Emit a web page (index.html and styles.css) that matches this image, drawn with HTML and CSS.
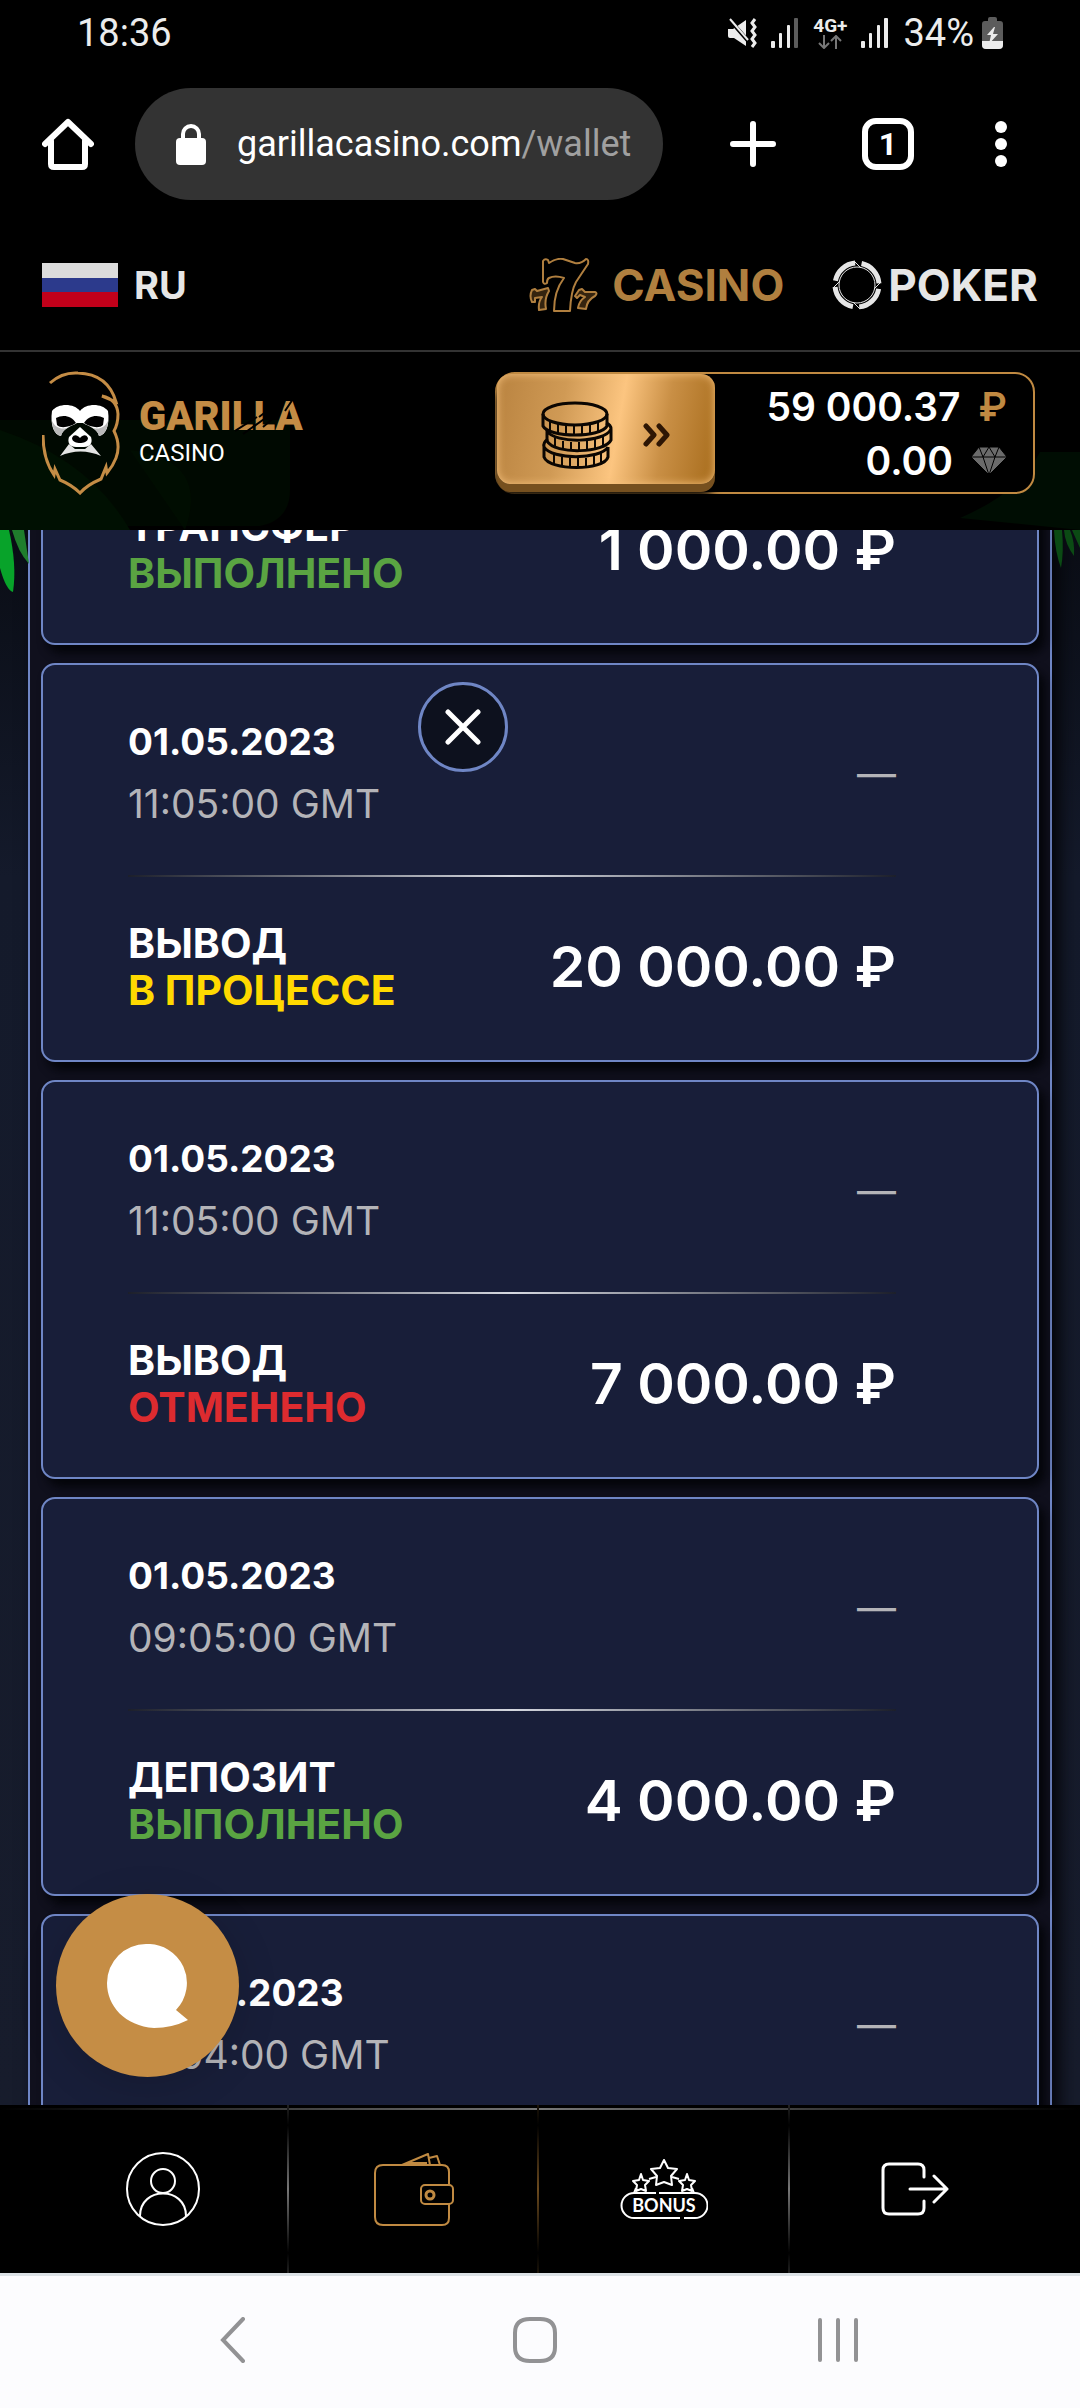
FILE: index.html
```html
<!DOCTYPE html>
<html lang="ru">
  <head>
    <meta charset="UTF-8" />
    <meta name="viewport" content="width=device-width, initial-scale=1" />
    <title>Garilla Casino</title>
    <link rel="stylesheet" href="styles.css">
  </head>
  <body>
    <div class="status-bar">
      <span class="clock">18:36</span>
      <div class="status-icons">
        <svg width="30" height="30" viewBox="0 0 30 30">
          <path d="M1 11h5l13-9v26L7 20H3q-2 0-2-2z" fill="#ececec" />
          <path d="M2 1l20 23" stroke="#000" stroke-width="4" />
          <path d="M3 1l18 21" stroke="#ececec" stroke-width="2" />
          <path d="M28 1l-3 4 3 4-3 4 3 4-3 4 3 4-3 4" fill="none" stroke="#ececec" stroke-width="3" />
        </svg>
        <svg width="28" height="30" viewBox="0 0 28 30" fill="#ececec">
          <rect x="0" y="23" width="4" height="7" rx="1" />
          <rect x="8" y="15" width="3" height="15" rx="1" />
          <rect x="16" y="7" width="3" height="23" rx="1" />
          <rect x="23" y="0" width="4" height="30" rx="1" fill="#5c5c5c" />
        </svg>
        <div class="network">
          <span>4G+</span>
          <svg width="24" height="14" viewBox="0 0 24 14" fill="none" stroke="#777" stroke-width="2">
            <path d="M6 0v12M1 8l5 5 5-5M18 14V2M13 6l5-5 5 5" />
          </svg>
        </div>
        <svg width="28" height="30" viewBox="0 0 28 30" fill="#ececec">
          <rect x="0" y="23" width="4" height="7" rx="1" />
          <rect x="8" y="15" width="3" height="15" rx="1" />
          <rect x="16" y="7" width="3" height="23" rx="1" />
          <rect x="23" y="0" width="4" height="30" rx="1" />
        </svg>
        <span>34%</span>
        <svg width="21" height="32" viewBox="0 0 21 32">
          <path d="M6 2q0-2 2-2h5q2 0 2 2v2h3q3 0 3 3v21q0 4-4 4H4q-4 0-4-4V7q0-3 3-3h3z" fill="#5c5c5c" />
          <path d="M0 24h21v4q0 4-4 4H4q-4 0-4-4z" fill="#ececec" />
          <path d="M12 10L5 18h4l-2 9 9-10h-5l2-7z" fill="#ececec" />
        </svg>
      </div>
    </div>

    <div class="browser-bar">
      <button class="icon-btn" aria-label="Home">
        <svg width="52" height="52" viewBox="0 0 52 52" fill="none" stroke="#fff" stroke-width="6" stroke-linecap="round" stroke-linejoin="round">
          <path d="M3 26L26 4l23 22" />
          <path d="M9 23v23q0 3 3 3h28q3 0 3-3V23" />
        </svg>
      </button>
      <button class="address">
        <svg width="30" height="41" viewBox="0 0 30 41">
          <path d="M7 16V10a8 8 0 0 1 16 0v6" fill="none" stroke="#fff" stroke-width="4" />
          <rect y="14" width="30" height="27" rx="4" fill="#fff" />
        </svg>
        <span>garillacasino.com<span class="path">/wallet</span></span>
      </button>
      <button class="icon-btn" aria-label="New tab">
        <svg width="46" height="46" viewBox="0 0 46 46" stroke="#fff" stroke-width="6" stroke-linecap="round">
          <path d="M23 3v40M3 23h40" />
        </svg>
      </button>
      <button class="tab-count">1</button>
      <button class="icon-btn" aria-label="Menu">
        <svg width="12" height="46" viewBox="0 0 12 46" fill="#fff">
          <circle cx="6" cy="6" r="6" /><circle cx="6" cy="23" r="6" /><circle cx="6" cy="40" r="6" />
        </svg>
      </button>
    </div>

    <header class="site-header">
      <div class="top-row">
        <button class="lang"><span class="flag"></span>RU</button>
        <nav class="sections">
          <a href="#" class="section active">
            <svg width="69" height="54" viewBox="0 0 69 54" fill="none" stroke="#b07f3f" stroke-width="2" stroke-linejoin="round">
              <path d="M14 3q2-3 5-1l1 3q7-5 14-4l12 4q6 1 11-4 3 0 2 5L47 24q-5 9-6 29H25q0-20 10-33-9-3-15 0-2 1-2 5-3 2-4-1z" />
              <path d="M3 32l3-1 2 2 11-3 1 3q-5 8-3 18l-7 1q-1-8 3-13l-7 1v4H3q-3-6 0-12z" fill="#35240f" />
              <path d="M50 32l3-1 3 3h10q3 1 0 4-8 4-9 13l-8-1q1-7 7-11l-5-2-3 3-2-2z" fill="#35240f" />
            </svg>
            CASINO
          </a>
          <a href="#" class="section poker">
            <svg width="50" height="50" viewBox="0 0 50 50" fill="none" stroke="#e6e6e6">
              <circle cx="25" cy="25" r="22" stroke-width="5" stroke-dasharray="28 6.56" stroke-dashoffset="-4" />
              <circle cx="25" cy="25" r="18" stroke-width="1" />
              <path d="M22 1l7 7M49 22l-7 7M28 49l-7-7M1 28l7-7" stroke-width="1" />
            </svg>
            POKER
          </a>
        </nav>
      </div>

      <div class="brand-row">
        <svg class="leaf-dim leaf-dim-left" width="290" height="110" viewBox="0 0 290 110" fill="#001002">
          <path d="M0 0h290v70q0 30-30 36H0z" opacity=".55" />
          <path d="M0 10Q90 40 130 110H0z" />
          <path d="M130 30q80 10 55 80z" opacity=".6" />
        </svg>
        <svg class="leaf-dim leaf-dim-right" width="120" height="78" viewBox="0 0 120 78" fill="#000d03">
          <path d="M120 0H80Q60 40 0 66l120 12z" />
        </svg>
        <a href="#" class="logo">
          <svg width="78" height="124" viewBox="0 0 78 124">
            <g fill="none" stroke="#c48c45" stroke-width="3">
              <path d="M8 12Q20 1 36 2q30 1 38 29l-14-6q15 3 16 18 0 10-4 17 7 14 2 27-3 8-9 15l-1-6-5 12q-14 6-21 14-8-8-20-13l-5-11-1 6Q1 88 1 64" />
            </g>
            <path d="M10 40c6-8 22-8 28 0 6-8 22-8 28 0 2 14-2 24-9 25-1-7-11-10-16-13h-6c-5 3-15 6-16 13-7-1-11-11-9-25z" fill="#fff" />
            <path d="M10 50c0 8 4 14 9 15 1-4 4-7 8-9-6 3-13 2-17-6zM66 50c0 8-4 14-9 15-1-4-4-7-8-9 6 3 13 2 17-6z" fill="#b9b9b9" />
            <path d="M14 47c7-4 16-2 20 5-6 4-15 6-19 2zM62 47c-7-4-16-2-20 5 6 4 15 6 19 2z" fill="#000" />
            <path d="M38 56l-11 10c-2 6 1 10 7 10h8c6 0 9-4 7-10z" fill="#fff" />
            <path d="M30 67c2-4 5-3 8 0 3-3 6-4 8 0 0 4-5 5-8 5s-8-1-8-5z" fill="#000" />
            <path d="M18 85l9-12 6 5h10l6-5 10 12c-13-6-28-6-41 0z" fill="#e4e4e4" />
          </svg>
          <span class="logo-text">
            <span class="logo-name">GARILLA</span>
            <span class="logo-sub">CASINO</span>
            <svg class="scratches" width="60" height="36" viewBox="0 0 60 36" stroke="#000" stroke-width="2">
              <path d="M0 32l22-14M8 35l24-17M24 18l16-12M28 28l14-12M50 12l8-12" />
            </svg>
          </span>
        </a>
        <div class="balance">
          <button class="cashier" aria-label="Касса">
            <svg width="72" height="68" viewBox="0 0 72 68" fill="none" stroke="#0b0602" stroke-width="3">
              <path d="M3 46v10c5 14 60 14 64 0V46M3 46c-1-4 1-6 4-8M3 46c8 13 56 13 64 0" />
              <path d="M13 53v10M21 56v9M29 57v9M37 57v9M45 57v9M53 55v9M60 52v9" stroke-width="2" />
              <path d="M6 28v12c8 14 58 12 64-1V28M6 30c8 13 58 12 64-2q0-4-5-6" />
              <path d="M14 37v10M22 40v9M30 41v9M38 41v9M46 40v9M54 38v9M62 35v9" stroke-width="2" />
              <ellipse cx="34" cy="13" rx="32" ry="11" />
              <path d="M2 13v12c6 12 58 12 64 0V13" />
              <path d="M9 20v9M17 23v9M25 24v9M33 24v9M41 24v9M49 23v9M57 21v9" stroke-width="2" />
            </svg>
            <svg width="28" height="24" viewBox="0 0 28 24" fill="none" stroke="#2e1604" stroke-width="5" stroke-linecap="round" stroke-linejoin="round">
              <path d="M3 3l8 9-8 9M16 3l8 9-8 9" />
            </svg>
          </button>
          <div class="sums">
            <span class="sum">59 000.37 <span class="rub">₽</span></span>
            <span class="sum">0.00
              <svg width="36" height="28" viewBox="0 0 36 28" fill="#6b6b6b" stroke="#000" stroke-width="1">
                <path d="M8 0h20l8 10-18 18L0 10z" />
                <path d="M0 10h36M8 0l4 10 6 18 6-18 4-10M12 10l6-10 6 10" fill="none" />
              </svg>
            </span>
          </div>
        </div>
      </div>
    </header>

    <main class="wallet">
      <svg class="leaf leaf-left" width="40" height="70" viewBox="0 0 40 70">
        <path d="M0 0h9q8 35 4 62Q6 60 0 38z" fill="#08a32a" />
        <path d="M12 0h12l5 34Q18 22 12 0z" fill="#1f7d2c" />
      </svg>
      <svg class="leaf leaf-right" width="26" height="50" viewBox="0 0 26 50" fill="#0b4a14">
        <path d="M0 0h8q2 22-1 38Q1 22 0 0zM10 0h6q5 12 4 26Q11 14 10 0zM18 0h8v18z" />
      </svg>

      <ul class="history">
        <li class="card">
          <div class="row">
            <div class="what"><b>ТРАНСФЕР</b><b class="done">ВЫПОЛНЕНО</b></div>
            <span class="amount">1 000.00 ₽</span>
          </div>
        </li>
        <li class="card">
          <div class="row">
            <div class="when"><b>01.05.2023</b><span>11:05:00 GMT</span></div>
            <span class="dash">—</span>
          </div>
          <hr>
          <div class="row">
            <div class="what"><b>ВЫВОД</b><b class="pending">В ПРОЦЕССЕ</b></div>
            <span class="amount">20 000.00 ₽</span>
          </div>
        </li>
        <li class="card">
          <div class="row">
            <div class="when"><b>01.05.2023</b><span>11:05:00 GMT</span></div>
            <span class="dash">—</span>
          </div>
          <hr>
          <div class="row">
            <div class="what"><b>ВЫВОД</b><b class="cancelled">ОТМЕНЕНО</b></div>
            <span class="amount">7 000.00 ₽</span>
          </div>
        </li>
        <li class="card">
          <div class="row">
            <div class="when"><b>01.05.2023</b><span>09:05:00 GMT</span></div>
            <span class="dash">—</span>
          </div>
          <hr>
          <div class="row">
            <div class="what"><b>ДЕПОЗИТ</b><b class="done">ВЫПОЛНЕНО</b></div>
            <span class="amount">4 000.00 ₽</span>
          </div>
        </li>
        <li class="card">
          <div class="row">
            <div class="when"><b>30.04.2023</b><span>12:04:00 GMT</span></div>
            <span class="dash">—</span>
          </div>
          <hr>
        </li>
      </ul>

      <button class="close-btn" aria-label="Закрыть">
        <svg width="36" height="36" viewBox="0 0 36 36" stroke="#fff" stroke-width="5" stroke-linecap="round">
          <path d="M3 3l30 30M33 3L3 33" />
        </svg>
      </button>
      <button class="chat-btn" aria-label="Чат">
        <svg width="82" height="84" viewBox="0 0 82 84" fill="#fff">
          <path d="M39 0a39 39 0 0 1 30 66l12 10q-16 8-34 8C18 82 0 62 0 39A39 39 0 0 1 39 0z" />
        </svg>
      </button>
    </main>

    <nav class="bottom-nav">
      <a href="#" aria-label="Профиль">
        <svg width="74" height="74" viewBox="0 0 74 74" fill="none" stroke="#fff" stroke-width="2">
          <circle cx="37" cy="37" r="36" />
          <circle cx="37" cy="29" r="12" />
          <path d="M14 64c0-30 46-30 46 0" />
        </svg>
      </a>
      <a href="#" aria-label="Кошелёк" class="gold">
        <svg width="80" height="73" viewBox="0 0 80 73" fill="none" stroke="#c08a42" stroke-width="2" stroke-linejoin="round">
          <path d="M75 32V19q0-7-7-7H9q-8 0-8 8v44q0 8 8 8h59q7 0 7-7V51" />
          <rect x="47" y="32" width="32" height="19" rx="4" />
          <circle cx="56" cy="42" r="4" stroke-width="3" />
          <path d="M28 12L54 1l2 11M55 5l8-2 3 9M35 10h18" />
        </svg>
      </a>
      <a href="#" aria-label="Бонусы">
        <svg width="88" height="60" viewBox="0 0 88 60" fill="none" stroke="#fff" stroke-width="2" stroke-linejoin="round">
          <path d="M36 34H14a12 12 0 0 0 0 25h46M64 59h11a12 12 0 0 0 0-25H39" />
          <path d="M44 1l4 8 9 1-6 7 1 9-8-3-8 3 1-9-6-7 9-1z" />
          <path d="M21 15l2 6 6 1-4 4 1 6-5-2-5 2 1-6-4-4 6-1zM67 15l2 6 6 1-4 4 1 6-5-2-5 2 1-6-4-4 6-1z" />
          <path d="M29 20l7-2M59 20l-7-2M16 29l-2 5M72 29l2 5" />
          <text x="44" y="53" class="bonus-text">BONUS</text>
        </svg>
      </a>
      <a href="#" aria-label="Выход">
        <svg width="68" height="54" viewBox="0 0 68 54" fill="none" stroke="#fff" stroke-width="3" stroke-linecap="round" stroke-linejoin="round">
          <path d="M43 15V8q0-6-6-6H8Q2 2 2 8v38q0 6 6 6h29q6 0 6-6v-7" />
          <path d="M29 27h37M53 14l13 13-13 13" />
        </svg>
      </a>
    </nav>

    <div class="system-nav">
      <button aria-label="Back">
        <svg width="26" height="46" viewBox="0 0 26 46" fill="none" stroke="#929294" stroke-width="4" stroke-linecap="round">
          <path d="M23 2L3 23l20 21" />
        </svg>
      </button>
      <button aria-label="Home screen">
        <svg width="46" height="46" viewBox="0 0 46 46" fill="none" stroke="#929294" stroke-width="4">
          <path d="M23 2h5q15 0 15 14v14q0 14-15 14H18Q3 44 3 30V16Q3 2 18 2z" />
        </svg>
      </button>
      <button aria-label="Recent apps">
        <svg width="40" height="44" viewBox="0 0 40 44" stroke="#929294" stroke-width="4" stroke-linecap="round">
          <path d="M2 2v40M20 2v40M38 2v40" />
        </svg>
      </button>
    </div>
  </body>
</html>
```
FILE: styles.css
```css
* {
  margin: 0;
  padding: 0;
  box-sizing: border-box;
}

body {
  height: 100vh;
  display: flex;
  flex-direction: column;
  background: #000;
  color: #fff;
  font-family: Inter, "Open Sans", sans-serif;
  overflow: hidden;
}

button {
  background: none;
  border: none;
  color: inherit;
  font: inherit;
  cursor: pointer;
}

a {
  color: inherit;
  text-decoration: none;
}

svg {
  display: block;
  flex-shrink: 0;
}

/* phone status bar */
.status-bar {
  height: 68px;
  padding: 0 77px 3px;
  display: flex;
  justify-content: space-between;
  align-items: center;
  font-family: Roboto, sans-serif;
  font-size: 38px;
  color: #ececec;
}

.status-icons {
  display: flex;
  align-items: center;
  gap: 14px;
}

.status-icons > :last-child {
  margin-left: -6px;
}

.network {
  display: flex;
  flex-direction: column;
  align-items: center;
  gap: 1px;
  font-size: 19px;
  font-weight: 700;
  line-height: 17px;
}

/* browser toolbar */
.browser-bar {
  height: 152px;
  padding: 0 73px 0 42px;
  display: flex;
  align-items: center;
  font-family: Roboto, sans-serif;
}

.icon-btn {
  flex-shrink: 0;
}

.address {
  flex: 1;
  height: 112px;
  margin: 0 67px 0 41px;
  padding: 0 24px 0 41px;
  display: flex;
  align-items: center;
  gap: 31px;
  border-radius: 56px;
  background: #333;
  font-size: 36px;
  white-space: nowrap;
}

.path {
  color: #a0a0a0;
}

.tab-count {
  flex-shrink: 0;
  width: 52px;
  height: 52px;
  margin: 0 81px 0 86px;
  border: 6px solid #fff;
  border-radius: 14px;
  font-size: 32px;
  font-weight: 700;
  line-height: 40px;
}

/* site header */
.site-header {
  position: relative;
  background: #000;
}

.top-row {
  height: 132px;
  padding: 0 42px;
  display: flex;
  justify-content: space-between;
  align-items: center;
  border-bottom: 2px solid #333;
}

.lang {
  display: flex;
  align-items: center;
  gap: 16px;
  font-size: 38px;
  font-weight: 700;
  color: #e6e6e6;
}

.flag {
  width: 76px;
  height: 44px;
  background: linear-gradient(#dcdcdc 33%, #2c3a8c 33% 66%, #c1001a 66%);
}

.sections {
  display: flex;
  align-items: center;
  gap: 48px;
}

.section {
  display: flex;
  align-items: center;
  gap: 14px;
  font-size: 44px;
  font-weight: 700;
  color: #e6e6e6;
}

.active {
  color: #b07f3f;
}

.poker {
  gap: 6px;
}

.brand-row {
  position: relative;
  height: 178px;
  padding: 0 45px 16px 42px;
  display: flex;
  justify-content: space-between;
  align-items: center;
}

.leaf-dim {
  position: absolute;
  bottom: 0;
}

.leaf-dim-left {
  left: 0;
}

.leaf-dim-right {
  right: 0;
}

.logo {
  position: relative;
  display: flex;
  align-items: center;
  gap: 19px;
}

.logo-text {
  position: relative;
  display: flex;
  flex-direction: column;
  font-family: Roboto, sans-serif;
}

.logo-name {
  font-size: 40px;
  font-weight: 900;
  line-height: 40px;
  color: #c48c45;
}

.logo-sub {
  font-size: 24px;
  line-height: 32px;
}

.scratches {
  position: absolute;
  top: 2px;
  right: 8px;
}

.balance {
  position: relative;
  width: 540px;
  height: 122px;
  display: flex;
  justify-content: space-between;
  border: 2px solid #c08a42;
  border-radius: 20px;
  background: #000;
}

.cashier {
  width: 218px;
  height: 110px;
  padding-top: 12px;
  display: flex;
  justify-content: center;
  align-items: center;
  gap: 30px;
  border-radius: 14px;
  background: linear-gradient(100deg, #b98340, #d09a55 30%, #fcc580 55%, #c98f45 75%, #a76c1c);
  box-shadow: inset 0 0 8px #f6c27e, 0 8px 0 #76501f, 0 12px 8px #000;
}

.sums {
  padding: 2px 26px 0 0;
  display: flex;
  flex-direction: column;
  justify-content: center;
  align-items: flex-end;
}

.sum {
  display: flex;
  align-items: center;
  gap: 18px;
  font-size: 39px;
  font-weight: 600;
  line-height: 54px;
}

.rub {
  color: #c08a42;
}

/* wallet history */
.wallet {
  position: relative;
  flex: 1;
  min-height: 0;
  overflow: hidden;
  padding: 0 28px;
  background: linear-gradient(#0a0d15, #141a2b 22%, #171c2c);
}

.leaf {
  position: absolute;
  top: 0;
}

.leaf-left {
  left: 0;
}

.leaf-right {
  right: 0;
}

/* the list is scrolled part way through the first card */
.history {
  margin-top: -77px;
  padding: 0 11px;
  display: flex;
  flex-direction: column;
  gap: 18px;
  list-style: none;
  border: 2px solid #6f86c5;
  background: #10101d;
  box-shadow: 8px 0 16px #05060a;
}

.card {
  padding: 46px 141px 46px 85px;
  border: 2px solid #6f86c5;
  border-radius: 14px;
  background: #181e39;
  box-shadow: 6px 8px 10px #04050a;
}

.row {
  display: flex;
  justify-content: space-between;
  align-items: center;
}

.when,
.what {
  display: flex;
  flex-direction: column;
  font-size: 37px;
  line-height: 62px;
}

.when span,
.dash {
  font-size: 39px;
  color: #b4b4b8;
}

.what {
  font-size: 41px;
  line-height: 47px;
}

.card hr {
  height: 2px;
  margin: 40px 0 43px;
  border: none;
  background: linear-gradient(90deg, #1c1f2b, #d5d8e0 50%, #1c1f2b);
}

.done {
  color: #5aa442;
}

.pending {
  color: #ffd900;
}

.cancelled {
  color: #dd2b2f;
}

.amount {
  font-size: 57px;
  font-weight: 600;
  line-height: 94px;
}

.close-btn {
  position: absolute;
  top: 152px;
  left: 418px;
  width: 90px;
  height: 90px;
  display: flex;
  justify-content: center;
  align-items: center;
  border: 3px solid #6f86c5;
  border-radius: 50%;
  background: #0d111e;
}

.chat-btn {
  position: absolute;
  bottom: 28px;
  left: 56px;
  width: 183px;
  height: 183px;
  display: flex;
  justify-content: center;
  align-items: center;
  border-radius: 50%;
  background: #c58d45;
  box-shadow: 0 8px 40px rgba(0, 0, 0, 0.15);
}

/* bottom menu */
.bottom-nav {
  height: 168px;
  padding: 0 40px 0 38px;
  display: grid;
  grid-template-columns: repeat(4, 1fr);
  background: linear-gradient(90deg, #000, #777 50%, #000) 0 3px / 100% 2px no-repeat #000;
}

.bottom-nav a {
  display: flex;
  justify-content: center;
  align-items: center;
  background: linear-gradient(#222, #000 12%, #777 50%, #000 88%, #222) right / 2px 100% no-repeat;
}

.bottom-nav .gold {
  background-image: linear-gradient(#1c1409, #000 12%, #6b4a1e 50%, #000 88%, #1c1409);
}

.bottom-nav a:last-child {
  background: none;
}

.bonus-text {
  fill: #fff;
  stroke: none;
  font-family: Lato, sans-serif;
  font-size: 18px;
  font-weight: 700;
  text-anchor: middle;
}

/* phone navigation buttons */
.system-nav {
  height: 135px;
  padding: 0 91px 4px 82px;
  display: grid;
  grid-template-columns: repeat(3, 1fr);
  border-top: 3px solid #dce2e6;
  background: #fcfcfe;
}

.system-nav button {
  display: flex;
  justify-content: center;
  align-items: center;
}
```
